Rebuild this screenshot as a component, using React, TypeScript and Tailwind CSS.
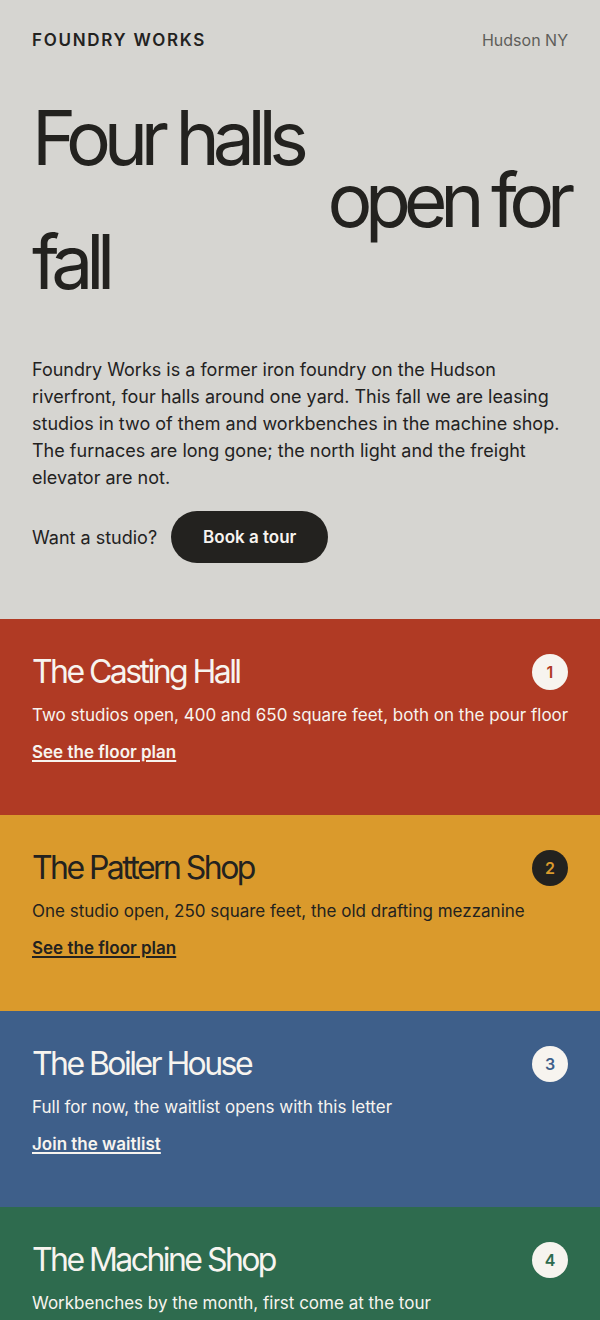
import React from "react";

type Hall = {
  n: number;
  title: string;
  desc: string;
  link: string;
  bg: string;
  text: string;
  badge: string;
};

const halls: Hall[] = [
  {
    n: 1,
    title: "The Casting Hall",
    desc: "Two studios open, 400 and 650 square feet, both on the pour floor",
    link: "See the floor plan",
    bg: "bg-[#b03a24]",
    text: "text-[#f7f4ef]",
    badge: "bg-[#f7f4ef] text-[#b03a24]",
  },
  {
    n: 2,
    title: "The Pattern Shop",
    desc: "One studio open, 250 square feet, the old drafting mezzanine",
    link: "See the floor plan",
    bg: "bg-[#da9a2c]",
    text: "text-[#23221f]",
    badge: "bg-[#23221f] text-[#da9a2c]",
  },
  {
    n: 3,
    title: "The Boiler House",
    desc: "Full for now, the waitlist opens with this letter",
    link: "Join the waitlist",
    bg: "bg-[#3e5f8a]",
    text: "text-[#f7f4ef]",
    badge: "bg-[#f7f4ef] text-[#3e5f8a]",
  },
  {
    n: 4,
    title: "The Machine Shop",
    desc: "Workbenches by the month, first come at the tour",
    link: "Reserve a bench",
    bg: "bg-[#2e6b4e]",
    text: "text-[#f7f4ef]",
    badge: "bg-[#f7f4ef] text-[#2e6b4e]",
  },
];

export default function App() {
  return (
    <div className="font-['Inter','Noto_Sans',sans-serif] text-[#23221f] antialiased">
      <section className="bg-[#d6d5d1] px-8 pt-7 pb-14">
        <header className="flex items-center justify-between">
          <span className="text-[17px] leading-6 font-semibold tracking-[0.1em]">FOUNDRY WORKS</span>
          <span className="text-base leading-6 text-[#5f5e5a]">Hudson NY</span>
        </header>

        <h1 className="mt-[55px] flex flex-col text-[75px] font-normal leading-[62px] tracking-[-0.097em]">
          <span>Four halls</span>
          <span className="self-end">open for</span>
          <span>fall</span>
        </h1>

        <p className="mt-[63px] text-[18px] leading-[27px]">
          Foundry Works is a former iron foundry on the Hudson riverfront, four halls around one yard. This fall we are
          leasing studios in two of them and workbenches in the machine shop. The furnaces are long gone; the north
          light and the freight elevator are not.
        </p>

        <div className="mt-5 flex items-center gap-[14px]">
          <span className="text-[18px] leading-[27px]">Want a studio?</span>
          <button className="rounded-full bg-[#23221f] px-8 py-[12.5px] text-[17px] leading-[27px] font-semibold text-[#f7f4ef]">
            Book a tour
          </button>
        </div>
      </section>

      {halls.map((h) => (
        <section key={h.n} className={`${h.bg} ${h.text} h-[196px] px-8 pt-[35px]`}>
          <div className="flex items-center justify-between">
            <h2 className="text-[32px] leading-9 font-normal tracking-[-0.08em]">{h.title}</h2>
            <span
              className={`${h.badge} flex h-9 w-9 items-center justify-center rounded-full text-base font-semibold`}
            >
              {h.n}
            </span>
          </div>
          <p className="mt-3 text-[17px] leading-[27px] whitespace-nowrap">{h.desc}</p>
          <a
            href="#"
            className="mt-2.5 inline-block text-[17px] leading-[27px] font-semibold underline decoration-[1.5px] underline-offset-2"
          >
            {h.link}
          </a>
        </section>
      ))}
    </div>
  );
}
